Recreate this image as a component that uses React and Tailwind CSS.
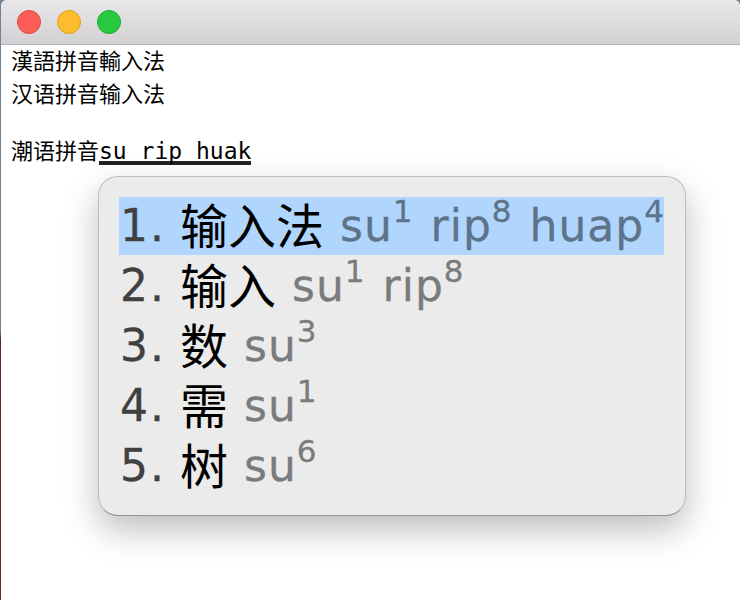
import React from 'react';

const CANDIDATES = [
  { n: '1.', word: '输入法', readings: [['su', '1'], ['rip', '8'], ['huap', '4']], active: true },
  { n: '2.', word: '输入', readings: [['su', '1'], ['rip', '8']] },
  { n: '3.', word: '数', readings: [['su', '3']] },
  { n: '4.', word: '需', readings: [['su', '1']] },
  { n: '5.', word: '树', readings: [['su', '6']] },
];

const CJK = "font-['Noto_Sans_CJK_SC',sans-serif]";

const Light = ({ className }) => (
  <div className={`w-6 h-6 rounded-full border ${className}`} />
);

const App = () => {
  return (
    <div className="w-[740px] h-[600px] overflow-hidden relative bg-[linear-gradient(to_bottom,#6f8296_0px,#6f8296_330px,#5a2a1e_340px,#6a3020_600px)]">
      <div className="ml-px w-[739px] h-[600px] bg-white rounded-t-[6px] overflow-hidden">
        {/* Title bar */}
        <div className="h-[45px] pl-[16px] flex items-center gap-4 bg-gradient-to-b from-[#e9e7e9] to-[#d2d0d2] border-b border-[#b6b4b6]">
          <Light className="bg-[#fc5e57] border-[#e2463f]" />
          <Light className="bg-[#fdbc2e] border-[#e1a116]" />
          <Light className="bg-[#28c83f] border-[#1aab29]" />
        </div>

        {/* Editor text */}
        <div className={`pl-[10px] pt-[1px] text-[22px] text-black ${CJK}`}>
          <div className="h-[33px] leading-[27px]">漢語拼音輸入法</div>
          <div className="h-[33px] leading-[27px]">汉语拼音输入法</div>
          <div className="h-[24px]" />
          <div className="h-[33px] leading-[27px] flex">
            潮语拼音
            <span className="font-['DejaVu_Sans_Mono',monospace] text-[23px] whitespace-pre border-b-4 border-[#222] h-[29px] leading-[30px]">su rip huak</span>
          </div>
        </div>
      </div>

      {/* Candidate popup */}
      <div className="absolute left-[98px] top-[176px] w-[588px] h-[340px] rounded-[20px] bg-[#ebebeb] border border-[#bdbdbd] border-b-[#969696] shadow-[0_14px_34px_rgba(0,0,0,0.26)] pl-[20px] pt-[20px]">
        {CANDIDATES.map((c) => (
          <div
            key={c.n}
            className={`flex items-start whitespace-pre font-['DejaVu_Sans',sans-serif] ${c.active ? 'w-[545px] mb-[2px] h-[58px] bg-[#b0d6fe]' : 'h-[60px]'}`}
          >
            <span className="w-[61px] shrink-0 pl-px text-[44px] tracking-[2px] leading-[58px] text-[#404040] [-webkit-text-stroke:0.3px]">{c.n}</span>
            <span className={`shrink-0 text-[48px] leading-[53px] text-black mr-[16px] ${CJK}`}>{c.word}</span>
            {c.readings.map(([syl, tone]) => (
              <span key={syl} className={`shrink-0 text-[44px] tracking-[1px] leading-[58px] mr-[17px] [-webkit-text-stroke:0.3px] ${c.active ? 'text-[#5d738a]' : 'text-[#7b7b7b]'}`}>
                {syl}
                <span className="text-[31px] leading-[20px] align-[19px]">{tone}</span>
              </span>
            ))}
          </div>
        ))}
      </div>
    </div>
  );
};

export default App;
